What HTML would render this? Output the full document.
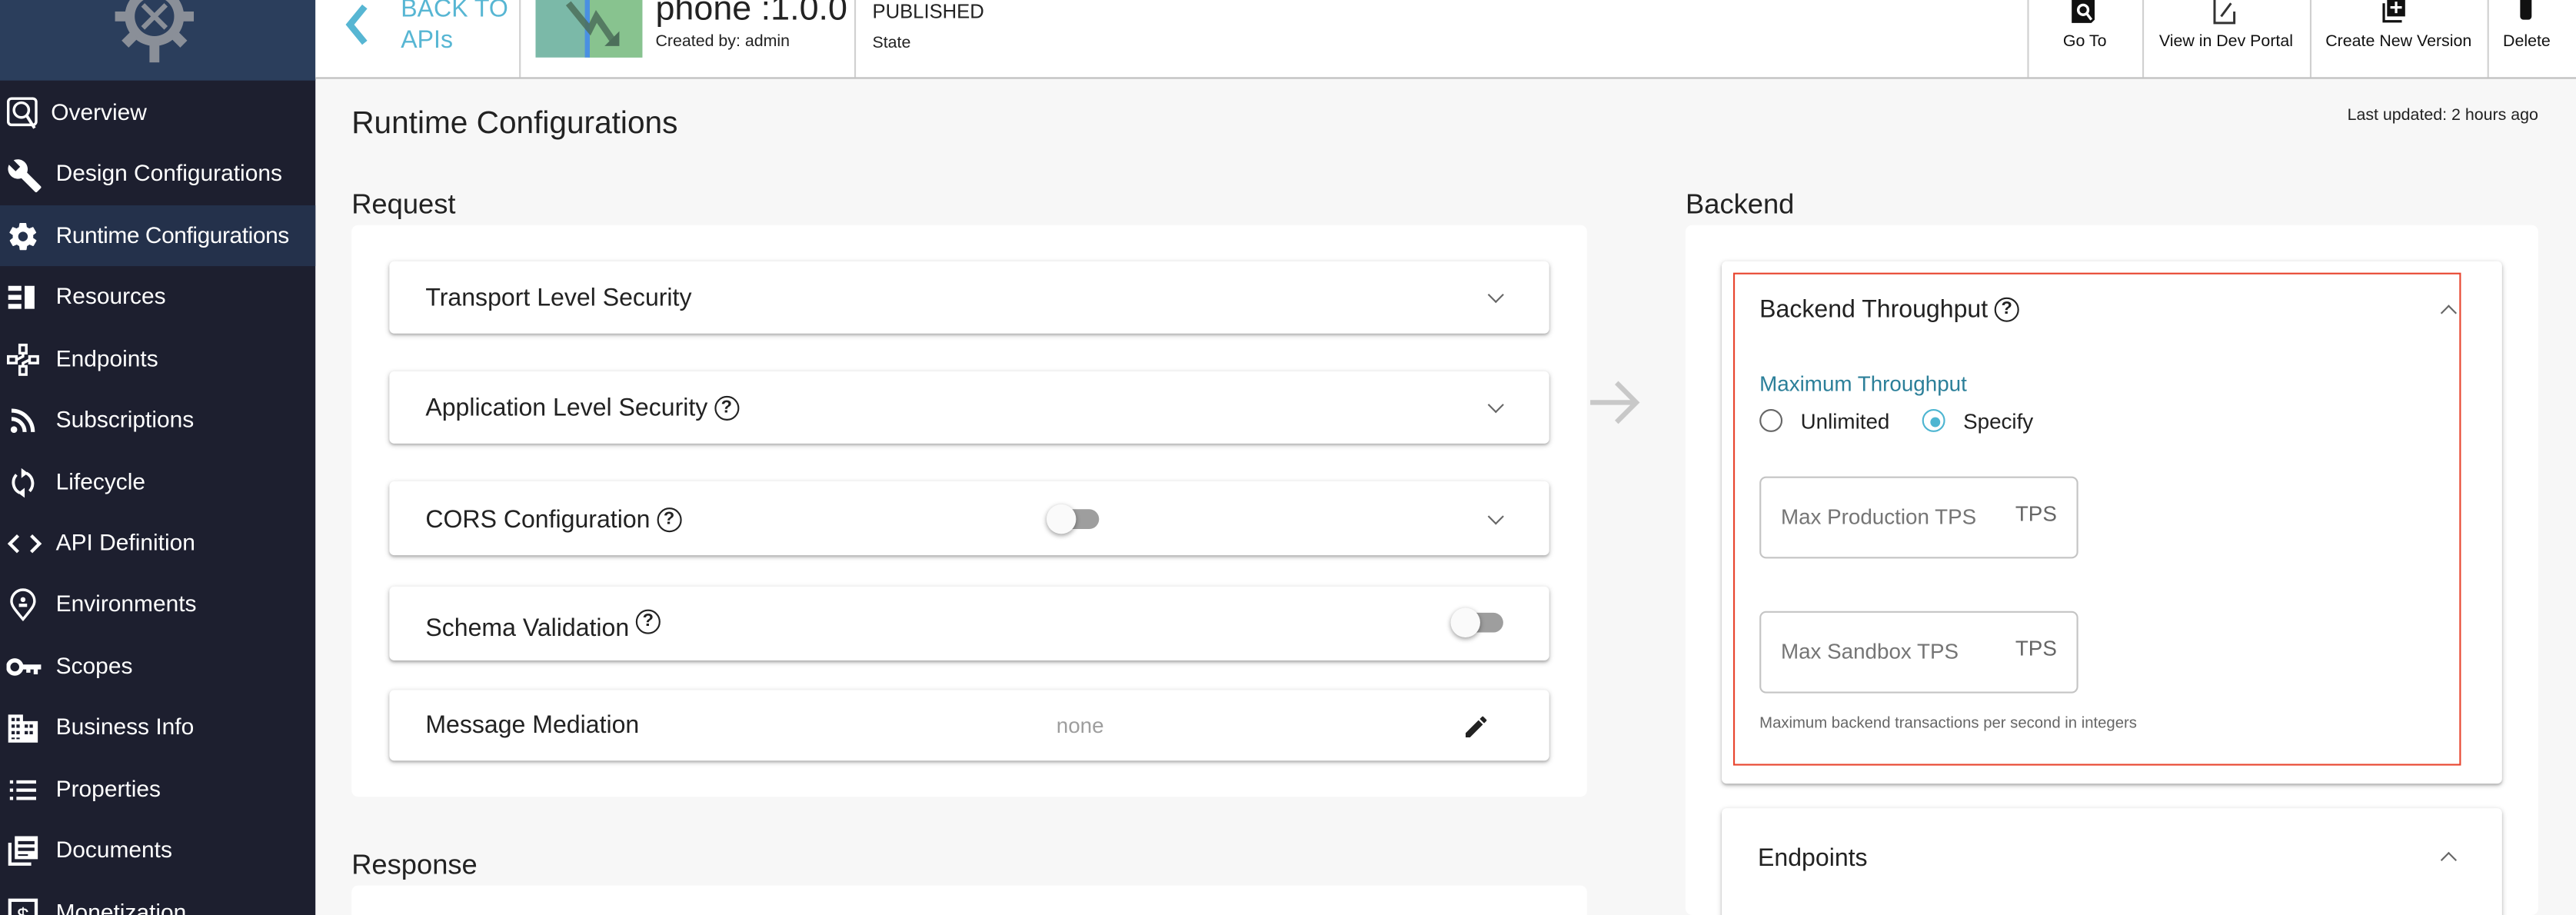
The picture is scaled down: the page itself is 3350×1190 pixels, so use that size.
<!DOCTYPE html>
<html><head><meta charset="utf-8">
<style>
html,body{margin:0;padding:0;width:3350px;height:1190px;overflow:hidden;background:#f7f7f7;}
#w{position:absolute;left:0;top:0;width:1568px;height:557px;overflow:hidden;transform:scale(2.13648);transform-origin:0 0;font-family:"Liberation Sans",sans-serif;color:#222;}
.a{position:absolute;}
.sb{left:0;top:0;width:192px;height:557px;background:#1d1f2f;}
.logo{left:0;top:0;width:192px;height:49px;background:#2b3e5c;}
.nav{position:absolute;left:0;width:192px;height:37px;color:#fff;font-size:14px;line-height:37px;}
.nav span{position:absolute;left:34px;top:0;}
.nav svg{position:absolute;left:4px;top:9px;}
.hdr{left:192px;top:0;width:1376px;height:47px;background:#fff;border-bottom:1px solid #bdbdbd;}
.vd{position:absolute;top:0;width:1px;height:47px;background:#d0d0d0;}
.btn{position:absolute;top:19px;font-size:10px;text-align:center;color:#111;}
.card{position:absolute;background:#fff;border-radius:3px;box-shadow:0 1px 3px rgba(0,0,0,.25),0 1px 1px rgba(0,0,0,.12);}
.ct{position:absolute;left:22px;font-size:15px;color:#222;}
.chev{position:absolute;width:6px;height:6px;border-right:1.5px solid #666;border-bottom:1.5px solid #666;transform:rotate(45deg);}
.chevu{position:absolute;width:6px;height:6px;border-left:1.5px solid #666;border-top:1.5px solid #666;transform:rotate(45deg);}
.q{display:inline-block;width:13px;height:13px;border:1.6px solid #222;border-radius:50%;font-size:11px;line-height:13px;text-align:center;font-weight:bold;vertical-align:2px;margin-left:4px;}
.tg{position:absolute;width:34px;height:18px;}
.tg .t{position:absolute;left:4px;top:3px;width:28px;height:12px;border-radius:6px;background:#9e9e9e;}
.tg .k{position:absolute;left:0;top:0;width:18px;height:18px;border-radius:50%;background:#fafafa;box-shadow:0 1px 3px rgba(0,0,0,.4);}
.inp{position:absolute;left:1071px;width:192px;height:48px;border:1px solid #c4c4c4;border-radius:4px;background:#fff;}
.inp .p{position:absolute;left:12px;top:16px;font-size:13px;color:#757575;}
.inp .u{position:absolute;right:12px;top:14px;font-size:13px;color:#666;}
</style></head><body><div id="w">
<div class="a sb"></div>
<div class="a logo">
<svg class="a" style="left:70px;top:-10px" width="48" height="50" viewBox="0 0 48 50"><g fill="#8a8f98"><circle cx="24" cy="20" r="18"/><rect x="21" y="34" width="6" height="14"/><rect x="38" y="17" width="10" height="6"/><rect x="0" y="17" width="10" height="6"/><rect x="35" y="31" width="8" height="6" transform="rotate(45 39 34)"/><rect x="5" y="31" width="8" height="6" transform="rotate(-45 9 34)"/></g><circle cx="24" cy="20" r="12" fill="#2b3e5c"/><path d="M17 13 L31 27 M31 13 L17 27" stroke="#8a8f98" stroke-width="3"/></svg>
</div>
<div class="nav" style="top:50px"><svg width="20" height="20" viewBox="0 0 20 20"><rect x="1" y="1" width="17" height="16" rx="2" fill="none" stroke="#fff" stroke-width="1.6"/><circle cx="9" cy="8" r="4.5" fill="none" stroke="#fff" stroke-width="1.6"/><path d="M12 11 L17 19" stroke="#fff" stroke-width="1.8"/></svg><span style="left:31px">Overview</span></div>
<div class="nav" style="top:87px"><svg width="22" height="22" viewBox="0 0 24 24"><path fill="#fff" d="M22.7 19l-9.1-9.1c.9-2.3.4-5-1.5-6.9-2-2-5-2.4-7.4-1.3L9 6 6 9 1.6 4.7C.4 7.1.9 10.1 2.9 12.1c1.9 1.9 4.6 2.4 6.9 1.5l9.1 9.1c.4.4 1 .4 1.4 0l2.3-2.3c.5-.4.5-1.1.1-1.4z"/></svg><span>Design Configurations</span></div>
<div class="nav" style="top:125px;background:#24314b"><svg width="20" height="20" viewBox="0 0 24 24"><path fill="#fff" d="M19.4 13c0-.3.1-.6.1-1s0-.7-.1-1l2.1-1.6c.2-.2.2-.4.1-.6l-2-3.5c-.1-.2-.4-.3-.6-.2l-2.5 1c-.5-.4-1.100-.7-1.700-1l-.4-2.6c0-.2-.2-.4-.5-.4h-4c-.2 0-.4.2-.5.4l-.4 2.6c-.6.3-1.2.6-1.7 1l-2.5-1c-.2-.1-.5 0-.6.2l-2 3.5c-.1.2-.1.5.1.6L4.6 11c0 .3-.1.7-.1 1s0 .7.1 1l-2.1 1.6c-.2.2-.2.4-.1.6l2 3.5c.1.2.4.3.6.2l2.5-1c.5.4 1.1.7 1.7 1l.4 2.6c0 .2.2.4.5.4h4c.2 0 .4-.2.5-.4l.4-2.6c.6-.3 1.2-.6 1.7-1l2.5 1c.2.1.5 0 .6-.2l2-3.5c.1-.2.1-.5-.1-.6L19.4 13zM12 15.5c-1.9 0-3.5-1.6-3.5-3.5s1.6-3.5 3.5-3.5 3.5 1.6 3.5 3.5-1.6 3.5-3.5 3.5z"/></svg><span style="letter-spacing:-0.2px">Runtime Configurations</span></div>
<div class="nav" style="top:162px"><svg width="20" height="20" viewBox="0 0 20 20"><g fill="#fff"><rect x="1" y="3" width="8" height="3"/><rect x="1" y="8.5" width="8" height="3"/><rect x="1" y="14" width="8" height="3"/><rect x="11" y="3" width="6" height="14"/></g></svg><span>Resources</span></div>
<div class="nav" style="top:200px"><svg width="20" height="20" viewBox="0 0 20 20"><g fill="none" stroke="#fff" stroke-width="1.6"><rect x="8" y="1" width="4" height="5"/><rect x="8" y="14" width="4" height="5"/><rect x="1" y="8" width="5" height="4"/><rect x="14" y="8" width="5" height="4"/><path d="M10 6v2l-4 2M10 14v-2l4-2"/></g></svg><span>Endpoints</span></div>
<div class="nav" style="top:237px"><svg width="20" height="20" viewBox="0 0 20 20"><g fill="none" stroke="#fff" stroke-width="2.4"><path d="M3 4a13 13 0 0 1 13 13"/><path d="M3 9a8 8 0 0 1 8 8"/></g><circle cx="4.5" cy="15.5" r="2" fill="#fff"/></svg><span>Subscriptions</span></div>
<div class="nav" style="top:275px"><svg width="20" height="20" viewBox="0 0 20 20"><g fill="none" stroke="#fff" stroke-width="1.8"><path d="M6 5a7 7 0 0 0 2 11M14 15a7 7 0 0 0-2-11"/></g><path fill="#fff" d="M9 1l4 3-4 3zM11 19l-4-3 4-3z"/></svg><span>Lifecycle</span></div>
<div class="nav" style="top:312px"><svg width="22" height="20" viewBox="0 0 22 20"><path d="M7 5l-5 5 5 5M15 5l5 5-5 5" fill="none" stroke="#fff" stroke-width="2"/></svg><span>API Definition</span></div>
<div class="nav" style="top:349px"><svg width="20" height="20" viewBox="0 0 20 20"><path d="M10 19 C6 14 3 11 3 8a7 7 0 0 1 14 0c0 3-3 6-7 11z" fill="none" stroke="#fff" stroke-width="1.6"/><circle cx="10" cy="7" r="1.5" fill="#fff"/><path d="M7.5 10.5h5" stroke="#fff" stroke-width="2"/></svg><span>Environments</span></div>
<div class="nav" style="top:387px"><svg width="22" height="20" viewBox="0 0 22 20"><circle cx="5" cy="10" r="4" fill="none" stroke="#fff" stroke-width="2.6"/><path fill="#fff" d="M9 8.5h12v3h-2v3h-2.5v-3h-2v2H12v-2H9z"/></svg><span>Scopes</span></div>
<div class="nav" style="top:424px"><svg width="20" height="20" viewBox="0 0 20 20"><path fill="#fff" fill-rule="evenodd" d="M1 2h9v4h9v13H1zM3 4v2h2V4zm3 0v2h2V4zM3 8v2h2V8zm3 0v2h2V8zm5 0v2h2V8zm3 0v2h2V8zM3 12v2h2v-2zm3 0v2h2v-2zm5 0v2h2v-2zm3 0v2h2v-2zM3 16v1h2v-1zm3 0v1h2v-1z"/></svg><span>Business Info</span></div>
<div class="nav" style="top:462px"><svg width="20" height="20" viewBox="0 0 20 20"><g fill="#fff"><rect x="2" y="4" width="2" height="2"/><rect x="2" y="9" width="2" height="2"/><rect x="2" y="14" width="2" height="2"/><rect x="6" y="4" width="12" height="2"/><rect x="6" y="9" width="12" height="2"/><rect x="6" y="14" width="12" height="2"/></g></svg><span>Properties</span></div>
<div class="nav" style="top:499px"><svg width="20" height="20" viewBox="0 0 20 20"><path fill="#fff" fill-rule="evenodd" d="M1 5h2v12h12v2H1zM5 1h14v14H5zm2 3v2h10V4zm0 4v2h10V8zm0 4v1h6v-1z"/></svg><span>Documents</span></div>
<div class="nav" style="top:537px"><svg width="20" height="20" viewBox="0 0 20 20"><rect x="2" y="2" width="16" height="16" fill="none" stroke="#fff" stroke-width="2"/><text x="10" y="16" font-size="13" fill="#fff" text-anchor="middle" font-family="Liberation Sans">$</text></svg><span>Monetization</span></div>

<div class="a hdr">
<svg class="a" style="left:16px;top:2px" width="20" height="26" viewBox="0 0 20 26"><path d="M14 2 L5 13 L14 24" fill="none" stroke="#57b6d3" stroke-width="4"/></svg>
<div class="a" style="left:52px;top:-4px;color:#57b6d3;font-size:15px;line-height:19px">BACK TO<br>APIs</div>
<div class="vd" style="left:124px"></div>
<div class="a" style="left:134px;top:0;width:65px;height:35px;background:#7bb9a8"></div>
<div class="a" style="left:166px;top:0;width:33px;height:35px;background:#88c38f"></div>
<div class="a" style="left:164px;top:0;width:3px;height:35px;background:#4a90e2"></div>
<svg class="a" style="left:134px;top:0" width="65" height="35"><path d="M20 2 L33 18 L37 10 L48 26" fill="none" stroke="#4c6f5a" stroke-width="4" opacity=".85"/><path d="M51 19 L51 28 L42 28 Z" fill="#4c6f5a"/></svg>
<div class="a" style="left:207px;top:-6px;font-size:21px">phone :1.0.0</div>
<div class="a" style="left:207px;top:20px;font-size:10px">Created by: admin</div>
<div class="vd" style="left:328px"></div>
<div class="a" style="left:339px;top:0;font-size:12px">PUBLISHED</div>
<div class="a" style="left:339px;top:21px;font-size:10px">State</div>
<div class="vd" style="left:1042px"></div><div class="vd" style="left:1112px"></div><div class="vd" style="left:1214px"></div><div class="vd" style="left:1322px"></div>
<svg class="a" style="left:1069px;top:0" width="14" height="15"><path d="M0 0h14v12l-2 2H0z" fill="#111"/><circle cx="7" cy="6" r="3" fill="none" stroke="#fff" stroke-width="1.6"/><path d="M9 8l3 4" stroke="#fff" stroke-width="1.6"/></svg>
<div class="btn" style="left:1042px;width:70px;top:20px">Go To</div>
<svg class="a" style="left:1155px;top:0" width="15" height="15"><path d="M1 0v14h12V7" fill="none" stroke="#333" stroke-width="1.4"/><path d="M5 10 L11 2" stroke="#333" stroke-width="1.4"/></svg>
<div class="btn" style="left:1112px;width:102px;top:20px">View in Dev Portal</div>
<svg class="a" style="left:1258px;top:0" width="16" height="14"><path d="M1 2v11h11" fill="none" stroke="#111" stroke-width="1.5"/><rect x="3" y="0" width="11" height="10" fill="#111"/><path d="M8.5 1v7M5 4.5h7" stroke="#fff" stroke-width="1.5"/></svg>
<div class="btn" style="left:1214px;width:108px;top:20px">Create New Version</div>
<div class="a" style="left:1342px;top:0;width:7px;height:12px;background:#111;border-radius:0 0 2px 2px"></div>
<div class="btn" style="left:1322px;width:48px;top:20px">Delete</div>
</div>

<div class="a" style="left:214px;top:65px;font-size:19px">Runtime Configurations</div>
<div class="a" style="left:1390px;top:65px;width:155px;text-align:right;font-size:10px">Last updated: 2 hours ago</div>
<div class="a" style="left:214px;top:115px;font-size:17px">Request</div>
<div class="a" style="left:214px;top:137px;width:752px;height:348px;background:#fff;border-radius:4px"></div>
<div class="card" style="left:237px;top:159px;width:706px;height:44px"><div class="ct" style="top:14px">Transport Level Security</div><div class="chev" style="left:670px;top:17px"></div></div>
<div class="card" style="left:237px;top:226px;width:706px;height:44px"><div class="ct" style="top:14px">Application Level Security<span class="q">?</span></div><div class="chev" style="left:670px;top:17px"></div></div>
<div class="card" style="left:237px;top:293px;width:706px;height:45px"><div class="ct" style="top:15px">CORS Configuration<span class="q">?</span></div><div class="tg" style="left:400px;top:14px"><div class="t"></div><div class="k"></div></div><div class="chev" style="left:670px;top:18px"></div></div>
<div class="card" style="left:237px;top:357px;width:706px;height:45px"><div class="ct" style="top:14px">Schema Validation<span class="q" style="vertical-align:6px">?</span></div><div class="tg" style="left:646px;top:13px"><div class="t"></div><div class="k"></div></div></div>
<div class="card" style="left:237px;top:420px;width:706px;height:43px"><div class="ct" style="top:13px">Message Mediation</div><div class="a" style="left:406px;top:14px;font-size:13px;color:#9e9e9e">none</div>
<svg class="a" style="left:653px;top:14px" width="17" height="17" viewBox="0 0 24 24"><path fill="#222" d="M3 17.25V21h3.75L17.81 9.94l-3.75-3.75L3 17.25zM20.71 7.04a1 1 0 0 0 0-1.41l-2.34-2.34a1 1 0 0 0-1.41 0l-1.83 1.830 3.75 3.75 1.83-1.83z"/></svg></div>
<svg class="a" style="left:966px;top:230px" width="34" height="30"><path d="M2 15h28M18 3l12 12-12 12" fill="none" stroke="#c8c8c8" stroke-width="3"/></svg>

<div class="a" style="left:1026px;top:115px;font-size:17px">Backend</div>
<div class="a" style="left:1026px;top:137px;width:519px;height:420px;background:#fff;border-radius:4px"></div>
<div class="card" style="left:1048px;top:159px;width:475px;height:318px"></div>
<div class="a" style="left:1055px;top:166px;width:441px;height:298px;border:1.5px solid #e8452f"></div>
<div class="a" style="left:1071px;top:180px;font-size:15px">Backend Throughput<span class="q">?</span></div>
<div class="chevu" style="left:1487px;top:187px"></div>
<div class="a" style="left:1071px;top:226px;font-size:13px;color:#2b7f99">Maximum Throughput</div>
<div class="a" style="left:1071px;top:249px;width:12px;height:12px;border:1.7px solid #666;border-radius:50%"></div>
<div class="a" style="left:1096px;top:249px;font-size:13px">Unlimited</div>
<div class="a" style="left:1170px;top:249px;width:12px;height:12px;border:1.7px solid #4db5d1;border-radius:50%"></div>
<div class="a" style="left:1174.5px;top:253.5px;width:6.5px;height:6.5px;background:#4db5d1;border-radius:50%"></div>
<div class="a" style="left:1195px;top:249px;font-size:13px">Specify</div>
<div class="inp" style="top:290px"><div class="p">Max Production TPS</div><div class="u">TPS</div></div>
<div class="inp" style="top:372px"><div class="p">Max Sandbox TPS</div><div class="u">TPS</div></div>
<div class="a" style="left:1071px;top:435px;font-size:9.5px;color:#666">Maximum backend transactions per second in integers</div>
<div class="card" style="left:1048px;top:492px;width:475px;height:80px"><div class="ct" style="top:22px">Endpoints</div><div class="chevu" style="left:439px;top:28px"></div></div>

<div class="a" style="left:214px;top:517px;font-size:17px">Response</div>
<div class="a" style="left:214px;top:539px;width:752px;height:30px;background:#fff;border-radius:4px"></div>
</div></body></html>
